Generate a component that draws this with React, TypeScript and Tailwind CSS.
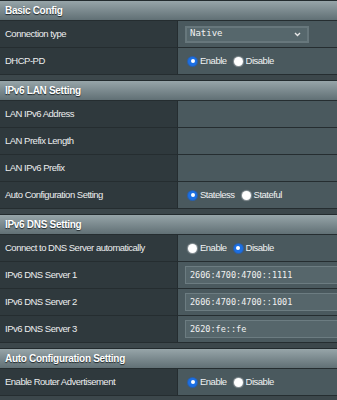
import { ReactNode } from 'react';

type Row = { label: string; value?: ReactNode };

function Radio({ checked }: { checked: boolean }) {
  if (checked) {
    return (
      <span className="flex items-center justify-center w-[9px] h-[9px] rounded-full bg-[#1b6fe4] shadow-[0_0_0_1px_#2a5fa8]">
        <span className="w-[4px] h-[4px] rounded-full bg-white" />
      </span>
    );
  }
  return <span className="w-[9px] h-[9px] rounded-full bg-white shadow-[0_0_1px_1px_#8c9599]" />;
}

function RadioGroup({ options, selected }: { options: string[]; selected: number }) {
  return (
    <div className="flex items-center gap-[7px] ml-[3px]">
      {options.map((opt, i) => (
        <label key={opt} className="flex items-center gap-[3px]">
          <Radio checked={i === selected} />
          <span>{opt}</span>
        </label>
      ))}
    </div>
  );
}

function TextBox({ value }: { value: string }) {
  return (
    <div className="flex items-center h-[18px] w-[170px] shrink-0 bg-[#56666b] border border-[#6c7c81] pl-[4px] font-['DejaVu_Sans_Mono',monospace] text-[8.5px] text-[#f2f2f2] tracking-normal">
      {value}
    </div>
  );
}

function Select({ value }: { value: string }) {
  return (
    <div className="flex items-center justify-between h-[17px] w-[124px] bg-[#56676c] border-2 border-[#67777c] pl-[3px] pr-[6px] font-['DejaVu_Sans_Mono',monospace] text-[9px] text-[#f2f2f2] tracking-normal">
      <span>{value}</span>
      <svg width="7" height="5" viewBox="0 0 7 5" className="text-[#e8e8e8]">
        <path d="M1 1 L3.5 3.5 L6 1" stroke="currentColor" strokeWidth="1.4" fill="none" />
      </svg>
    </div>
  );
}

function Section({ title, rows }: { title: string; rows: Row[] }) {
  return (
    <div>
      <div className="border-t border-[#232b2e]">
        <div className="h-[19px] flex items-center px-[5px] bg-gradient-to-b from-[#97a5a9] to-[#617075] text-white font-bold text-[10px] tracking-[-0.3px] [text-shadow:0_1px_1px_#1d2528]">
          {title}
        </div>
      </div>
      {rows.map((r) => (
        <div key={r.label} className="flex h-[27px] border-t border-[#252d30]">
          <div className="w-[178px] shrink-0 flex items-center pl-[5px] bg-[#2f393d] border-r border-[#252d30] text-[#eceeef]">
            {r.label}
          </div>
          <div className="flex-1 flex items-center pl-[7px] bg-[#4a595e] text-[#f0f2f3] overflow-hidden">
            {r.value}
          </div>
        </div>
      ))}
      <div className="h-[6px] border-t border-[#252d30] bg-[#3c474b]" />
    </div>
  );
}

export default function App() {
  return (
    <div className="w-[337px] h-[400px] overflow-hidden bg-[#3c474b] font-['Liberation_Sans',Arial,sans-serif] text-[9.5px] tracking-[-0.5px]">
      <Section
        title="Basic Config"
        rows={[
          { label: 'Connection type', value: <Select value="Native" /> },
          { label: 'DHCP-PD', value: <RadioGroup options={['Enable', 'Disable']} selected={0} /> },
        ]}
      />
      <Section
        title="IPv6 LAN Setting"
        rows={[
          { label: 'LAN IPv6 Address' },
          { label: 'LAN Prefix Length' },
          { label: 'LAN IPv6 Prefix' },
          { label: 'Auto Configuration Setting', value: <RadioGroup options={['Stateless', 'Stateful']} selected={0} /> },
        ]}
      />
      <Section
        title="IPv6 DNS Setting"
        rows={[
          { label: 'Connect to DNS Server automatically', value: <RadioGroup options={['Enable', 'Disable']} selected={1} /> },
          { label: 'IPv6 DNS Server 1', value: <TextBox value="2606:4700:4700::1111" /> },
          { label: 'IPv6 DNS Server 2', value: <TextBox value="2606:4700:4700::1001" /> },
          { label: 'IPv6 DNS Server 3', value: <TextBox value="2620:fe::fe" /> },
        ]}
      />
      <Section
        title="Auto Configuration Setting"
        rows={[
          { label: 'Enable Router Advertisement', value: <RadioGroup options={['Enable', 'Disable']} selected={0} /> },
        ]}
      />
    </div>
  );
}
